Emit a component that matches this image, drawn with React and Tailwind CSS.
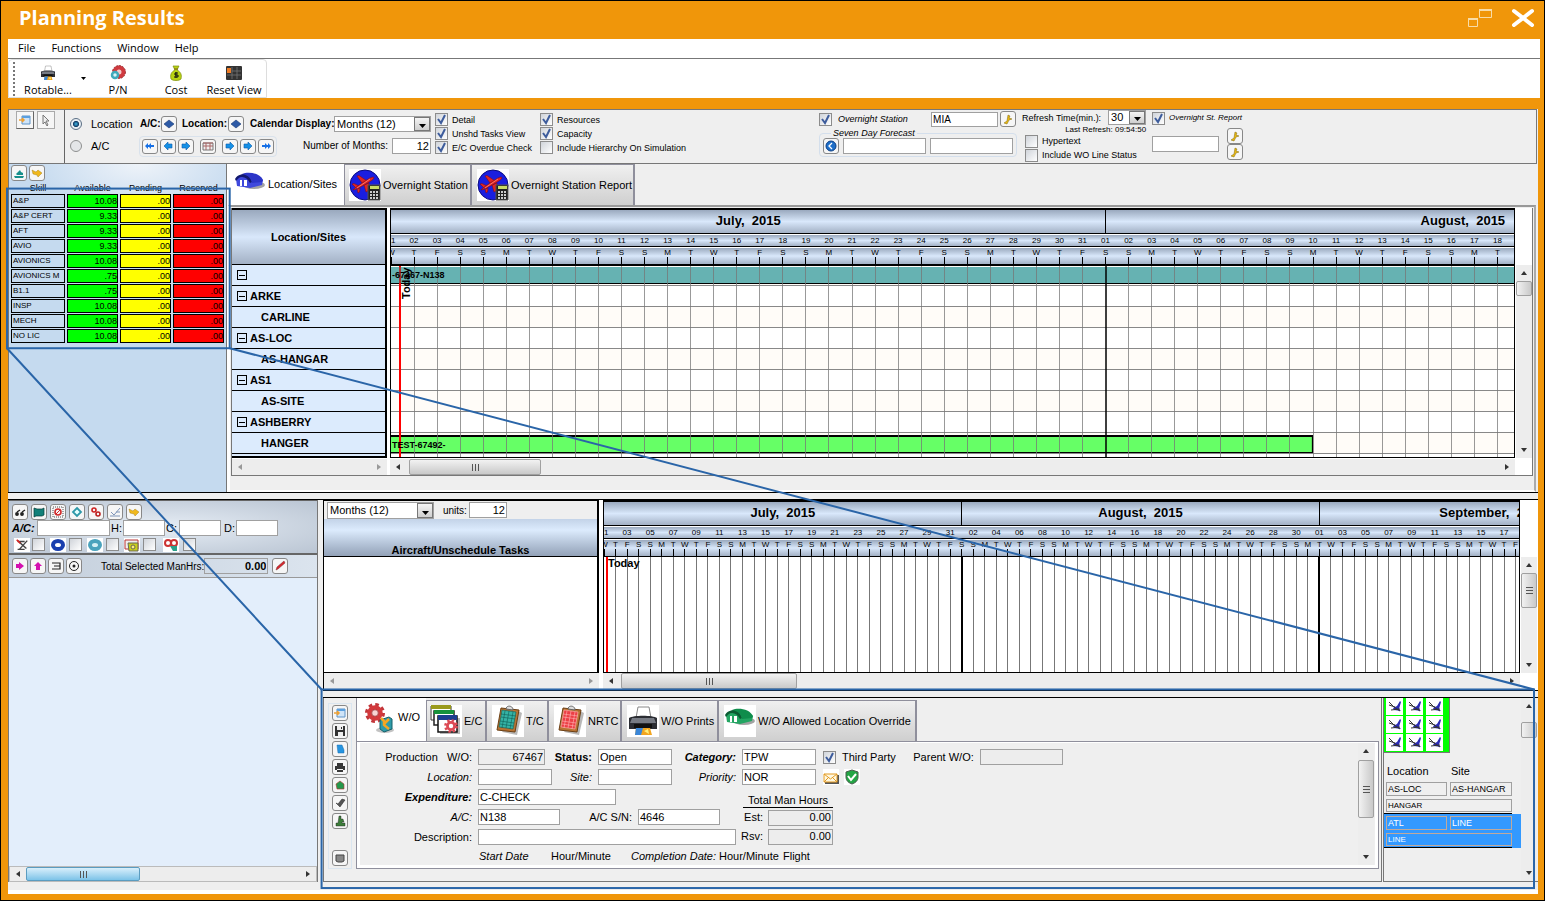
import clsx from "clsx";

const SKILLS = [
  ["A&P", "10.08"],
  ["A&P CERT", "9.33"],
  ["AFT", "9.33"],
  ["AVIO", "9.33"],
  ["AVIONICS", "10.08"],
  ["AVIONICS M", ".75"],
  ["B1.1", ".75"],
  ["INSP", "10.08"],
  ["MECH", "10.08"],
  ["NO LIC", "10.08"],
];

const LOCATIONS = [
  { name: "", parent: true },
  { name: "ARKE", parent: true },
  { name: "CARLINE" },
  { name: "AS-LOC", parent: true },
  { name: "AS-HANGAR" },
  { name: "AS1", parent: true },
  { name: "AS-SITE" },
  { name: "ASHBERRY", parent: true },
  { name: "HANGER" },
];

const MONTHS = [
  { label: "July,  2015", start: 0, days: 31 },
  { label: "August,  2015", start: 31, days: 31 },
  { label: "September,  2015", start: 62, days: 30 },
];

const WEEKDAYS = "WTFSSMT";

const STEEL = "bg-linear-to-b from-[#9aa9be] via-[#d9e8fb] to-[#a3b1c5]";

/* ---------- icons ---------- */

function Gear({ cx, cy, r, fill, hole = "#fff" }) {
  return (
    <g>
      <circle cx={cx} cy={cy} r={r} fill="none" stroke={fill} strokeWidth={r * 0.5} strokeDasharray={`${r * 0.42} ${r * 0.365}`} />
      <circle cx={cx} cy={cy} r={r * 0.9} fill={fill} />
      <circle cx={cx} cy={cy} r={r * 0.4} fill={hole} />
    </g>
  );
}

function GearsIcon({ className }) {
  return (
    <svg viewBox="0 0 32 32" className={className} aria-hidden="true">
      <ellipse cx="21" cy="28" rx="9" ry="3" fill="#999" opacity=".6" />
      <circle cx="11" cy="11" r="8.500" fill="none" stroke="#c2363a" strokeWidth="3" strokeDasharray="3.6 3.075" />
      <circle cx="11" cy="11" r="5.500" fill="none" stroke="#d3393c" strokeWidth="4.500" />
      <circle cx="11" cy="11" r="3.300" fill="#f7d4d4" stroke="#8f1f22" strokeWidth=".7" />
      <path d="M16 18l9-3 3 2v10l-8 3-4-3z" fill="#2f9ba8" stroke="#14606b" />
      <path d="M17 16l3 3 0 4 5 4M20 22l5-5" stroke="#f5a623" strokeWidth="2.5" fill="none" />
    </svg>
  );
}

function WindowsIcon({ className }) {
  return (
    <svg viewBox="0 0 32 32" className={className} aria-hidden="true">
      <path d="M10 13h20v16H10z" fill="#888" opacity=".6" />
      <path d="M1 1h20v14H1z" fill="#fff" stroke="#333" />
      <path d="M1 0h20v4H1z" fill="#9a9a1c" />
      <path d="M4 6h20v14H4z" fill="#fff" stroke="#222" strokeWidth="1.5" />
      <path d="M4 5h20v4H4z" fill="#16913c" />
      <path d="M8 11h19v16H8z" fill="#fff" stroke="#111" strokeWidth="1.5" />
      <path d="M8 10h19v5H8z" fill="#1c3d8f" />
      <Gear cx={21} cy={21} r={5.5} fill="#dc4a55" />
    </svg>
  );
}

function ClipboardIcon({ className, color, dark }) {
  return (
    <svg viewBox="0 0 32 32" className={className} aria-hidden="true">
      <path d="M10 27l15 3 5-22-4-2z" fill="#888" opacity=".6" />
      <path d="M9 3l18 2-4 22-18-2z" fill="#b87333" stroke="#6b3f14" />
      <path d="M10 5l14 2-3 17-14-2z" fill={color} stroke={dark} strokeWidth=".6" />
      <path d="M9 9l15 2M9 12l14 2M8 16l14 2M8 19l13 2M13 6l-3 17M17 6l-3 17M21 7l-3 17" stroke={dark} strokeWidth=".6" />
      <path d="M14 4c0-4 7-4 7 1z" fill="#ddd" stroke="#666" />
    </svg>
  );
}

function PrinterIcon({ className }) {
  return (
    <svg viewBox="0 0 32 32" className={className} aria-hidden="true">
      <path d="M9 13l2-11h11l2 11z" fill="#fff" stroke="#888" />
      <path d="M2 13c4-3 24-3 28 0v11H2z" fill="#2b2d33" />
      <path d="M5 13h22l2 5H3z" fill="#777b84" />
      <path d="M7 19h18v4H7z" fill="#111" />
      <path d="M9 23h14l2 7H8z" fill="#f2a51f" />
      <path d="M9 23h7l-2 7H8z" fill="#3a86d8" />
      <path d="M17 26l4-2 1 5z" fill="#fff07a" />
    </svg>
  );
}

function HouseIcon({ className, roof, dark, wall }) {
  return (
    <svg viewBox="0 0 32 20" className={className} aria-hidden="true">
      <ellipse cx="20" cy="14" rx="11" ry="4" fill="#666" opacity=".6" />
      <path d="M2 8l6-4 12-1 9 6-1 5-12 3-13-2z" fill={wall} />
      <path d="M1 8c3-5 8-5 10-5 5 1 6 5 7 8l-2 1c-2-4-5-6-8-6-3 0-4 2-6 4z" fill={dark} />
      <path d="M8 3c6-3 18-1 21 6l-1 2-10 1c-1-5-4-8-10-9z" fill={roof} />
      <path d="M6 9h2v6H6zM10 9h3v6h-3z" fill="#fff" />
    </svg>
  );
}

function StationIcon() {
  return (
    <span className="flex size-8 shrink-0 bg-white">
      <svg viewBox="0 0 32 32" className="size-8" aria-hidden="true">
        <circle cx="16" cy="16" r="15" fill="#1a1ee0" stroke="#0c0c80" />
        <g fill="#e02424" stroke="#7c0d0d" strokeWidth=".5">
          <path d="M13 14L8 7l2-.5 8 5.500z" />
          <path d="M15 16l2 7 2-1 1-8z" />
          <path d="M7 19l-4-4 2-.5 5 2.500z" />
          <path d="M8 20l1 4 1.500-1 .5-4z" />
          <path d="M4 21c1-2 12-9 17-12 2-1 3-1 4-.5 0 1-1 2-2.500 3C18 14.500 9 20 4 21z" />
        </g>
        <path d="M8 19l13-9" stroke="#ff8b7b" strokeWidth=".8" />
        <path d="M19 16h12v15H19z" fill="#222" stroke="#555" />
        <path d="M21 17h9v3h-9z" fill="#c9dc66" />
        <path d="M21 22h2v2h-2zM24 22h2v2h-2zM27 22h2v2h-2zM21 25h2v2h-2zM24 25h2v2h-2zM27 25h2v2h-2zM21 28h2v2h-2zM24 28h2v2h-2zM27 28h2v2h-2z" fill="#ccc" />
      </svg>
    </span>
  );
}

function PlaneIcon() {
  return (
    <svg viewBox="0 0 17 17" className="h-[17px] w-[17px] bg-white" aria-hidden="true">
      <path d="M7 10l4-2 3-5 1 1-2 7 2 2-7-1z" fill="#2b2bb4" />
      <path d="M3 4l5 5 6 4M3 7l6 2M5 12l9-1" stroke="#333" strokeWidth="1" fill="none" />
    </svg>
  );
}

function MoneyBag() {
  return (
    <svg viewBox="0 0 16 16" className="size-4" aria-hidden="true">
      <path d="M5 1h6L9 5c4 2 5 5 4 9-2 2-8 2-10 0-1-4 0-7 4-9z" fill="#b9d313" stroke="#7b8d0c" strokeWidth=".7" />
      <path d="M6 4h4" stroke="#7a5a12" />
      <path d="M10 8H7v2h3v2H6M8 7v6" stroke="#111" fill="none" />
    </svg>
  );
}

function RotorIcon() {
  return (
    <svg viewBox="0 0 16 16" className="size-4" aria-hidden="true">
      <circle cx="9" cy="7" r="4.500" fill="#f4c9c9" stroke="#cf3a3f" strokeWidth="4" />
      <circle cx="9" cy="7" r="6.500" fill="none" stroke="#8f1f22" strokeWidth=".8" strokeDasharray="2 1" />
      <circle cx="5" cy="10" r="3" fill="#d9f3f7" stroke="#3fa9bb" strokeWidth="2.500" />
    </svg>
  );
}

function ResetIcon() {
  return (
    <svg viewBox="0 0 16 16" className="size-4" aria-hidden="true">
      <rect y="1" width="16" height="14" rx="1" fill="#333" />
      <path d="M1 3h4v5H1z" fill="#ee7b24" />
      <path d="M6 2v12M11 2v12M6 6h9M1 10h14" stroke="#777" strokeWidth=".8" />
    </svg>
  );
}

// small glyphs used on the square tool buttons
const GLYPHS = {
  sheet: (
    <g>
      <path d="M3 2h8v8H3z" fill="#cfe4f8" stroke="#5e94c8" />
      <path d="M3 2h8v2H3z" fill="#5aa0e0" />
      <path d="M0 6h5M3 4l2 2-2 2" stroke="#f0a030" strokeWidth="1.5" fill="none" />
    </g>
  ),
  diamond: <path d="M6 2l5 4-5 4-5-4z" fill="#2d5aa6" stroke="#1a3a75" strokeWidth=".6" />,
  tealboat: <path d="M1 9h10l-1 2H2zM3 7l4-4 1 2 2 1v2H4z" fill="#178f8b" />,
  pointer: <path d="M1 3l4 2 2-2 4 3-4 4-1-2-4-1z" fill="#f0b81c" stroke="#9a7208" strokeWidth=".4" />,
  key: <path d="M6 2l2 1-1 2 3 1-3 1-2 4-3-1 3-2z" fill="#e8b90e" stroke="#80650a" strokeWidth=".5" />,
  glasses: (
    <g fill="#222" stroke="#222" strokeWidth="1.4">
      <circle cx="3" cy="8" r="1.2" />
      <circle cx="8" cy="8" r="1.2" />
      <path d="M3 6l3-2M8 6l3-2" />
    </g>
  ),
  screen: <path d="M1 2l3 1h5l2-1v7l-2 1H3l-2 1z" fill="#128079" stroke="#053c39" strokeWidth=".7" />,
  redbox: (
    <g fill="none">
      <path d="M1 1h10v10H1z" stroke="#555" strokeDasharray="1 1" />
      <circle cx="6" cy="6" r="3" stroke="#d22a2a" strokeWidth="1.6" />
      <path d="M4 8l4-4" stroke="#d22a2a" />
    </g>
  ),
  diamondring: <path d="M6 2l4 4-4 4-4-4z" fill="#e6ffff" stroke="#2d98a8" strokeWidth="1.8" />,
  gears: (
    <g>
      <circle cx="4" cy="4" r="2" stroke="#c22" strokeWidth="1.6" fill="none" />
      <circle cx="8" cy="8" r="2" stroke="#b22" strokeWidth="1.6" fill="none" />
    </g>
  ),
  check: <path d="M1 10h10M2 6l3 3 6-7M7 6h4" stroke="#7d94b8" fill="none" />,
  magentaRight: <path d="M5 2l5 4-5 4V8H2V4h3z" fill="#d411b0" />,
  magentaUp: <path d="M6 2l4 4H8v4H4V6H2z" fill="#d411b0" />,
  list: <path d="M2 3h8v6H2M4 6h6" stroke="#222" fill="none" strokeWidth="1.2" />,
  target: (
    <g>
      <circle cx="6" cy="6" r="4.5" stroke="#222" fill="none" />
      <circle cx="6" cy="6" r="1.5" fill="#222" />
    </g>
  ),
  pencil: <path d="M2 10l1-3 7-6 1 2-7 6z" fill="#d8262c" stroke="#733" strokeWidth=".5" />,
  globe: (
    <g>
      <circle cx="6" cy="6" r="5" fill="#1f6fc9" stroke="#0c3f86" />
      <path d="M7 3L4 6l3 3" stroke="#fff" fill="none" strokeWidth="1.3" />
    </g>
  ),
  save: (
    <g>
      <path d="M1 1h10v10H1z" fill="#333" />
      <path d="M3 1h6v4H3zM4 7h5v4H4z" fill="#eee" />
      <path d="M7 2h1v2H7z" fill="#333" />
    </g>
  ),
  page: <path d="M3 2h5l2 5v3H4z" fill="#2795e0" stroke="#1c6fb0" strokeWidth=".5" />,
  print: <path d="M3 2h6v3h2v4H9V8H3v1H1V5h2zM3 9h6v2H3z" fill="#383838" />,
  greenbox: <path d="M2 5l4-3 4 3v5H3z" fill="#25984c" stroke="#b33" strokeWidth=".6" />,
  pen: <path d="M2 6l4 4 5-7-3-1-4 5z" fill="#555" stroke="#222" strokeWidth=".5" />,
  person: <path d="M5 1h2v3h2l1 3-2 0v1h3v3H2V8h2z" fill="#3c7d3a" stroke="#222" strokeWidth=".4" />,
  gray: <path d="M2 3h8v6l-2 1H4L2 9z" fill="#888" stroke="#444" />,
  calendar: (
    <g>
      <path d="M1 3h10v7H1z" fill="#eee" stroke="#777" />
      <path d="M1 3h10M4 3v7M8 3v7M1 6h10" stroke="#a66" />
    </g>
  ),
  cursor: <path d="M3 1l6 6H6l2 4-1 1-2-4-2 2z" fill="#eee" stroke="#777" />,
  left: <path d="M2 6l4-4v2h4v4H6v2z" fill="#1590e6" stroke="#0d5cab" strokeWidth=".6" />,
  right: <path d="M10 6L6 2v2H2v4h4v2z" fill="#1590e6" stroke="#0d5cab" strokeWidth=".6" />,
  first: <path d="M1 6l3-3v2h1l2-2v2h3v2H7v2L5 7H4v2z" fill="#1670e6" />,
  last: <path d="M11 6L8 3v2H7L5 3v2H2v2h3v2l2-2h1v2z" fill="#1670e6" />,
};

/* ---------- form bits ---------- */

function ToolButton({ glyph, label, className = "size-4" }) {
  return (
    <button
      type="button"
      aria-label={label}
      className={clsx("flex shrink-0 items-center justify-center rounded-[3px] border border-[#888] bg-[#f6f6f6] p-px", className)}
    >
      <svg viewBox="0 0 12 12" className="size-3">
        {GLYPHS[glyph]}
      </svg>
    </button>
  );
}

function Field({ label, value = "", className, readOnly }) {
  return (
    <input
      type="text"
      aria-label={label}
      defaultValue={value}
      readOnly={readOnly}
      className={clsx("min-w-0 shrink-0 rounded-none border border-[#a0a0a0] px-px outline-none", readOnly ? "bg-[#ededed]" : "bg-white", className)}
    />
  );
}

function CheckBox({ label, hideLabel, checked, className, gap = "gap-1" }) {
  return (
    <label className={clsx("flex items-center whitespace-nowrap", gap, className)}>
      <span className="relative flex size-[13px] shrink-0">
        <input
          type="checkbox"
          defaultChecked={checked}
          aria-label={hideLabel ? label : undefined}
          className="peer size-[13px] appearance-none border border-[#8c8c8c] bg-linear-to-br from-[#d0d4da] to-white"
        />
        <svg viewBox="0 0 13 13" className="pointer-events-none absolute inset-0 hidden peer-checked:block">
          <path d="M3 6l3 4 4-8" fill="none" stroke="#3d5c9c" strokeWidth="2" />
        </svg>
      </span>
      {!hideLabel && label}
    </label>
  );
}

function Radio({ label, checked }) {
  return (
    <label className="flex w-[69px] shrink-0 items-center gap-[9px] text-[11px]">
      <input
        type="radio"
        name="view-by"
        defaultChecked={checked}
        className="size-3 shrink-0 appearance-none rounded-full border border-[#8e8f8f] bg-[#e4e6e8] checked:border-[#5b6f85] checked:bg-[radial-gradient(circle,#3fb8e8_0,#123c66_38%,#e8eef4_50%)]"
      />
      {label}
    </label>
  );
}

function Select({ label, options, className, arrow = "w-4" }) {
  return (
    <span className={clsx("relative flex shrink-0", className)}>
      <select aria-label={label} className="h-full w-full appearance-none rounded-none border border-[#a0a0a0] bg-white px-0.5 text-[11px] leading-none outline-none">
        {options.map((o) => (
          <option key={o}>{o}</option>
        ))}
      </select>
      <span className={clsx("pointer-events-none absolute inset-y-px right-px flex items-end justify-center border border-[#777] bg-linear-to-b from-[#f4f4f4] to-[#cfcfcf] pb-0.5", arrow)}>
        <svg viewBox="0 0 7 4" className="h-1 w-[7px]">
          <path d="M0 0h7L3.5 4z" />
        </svg>
      </span>
    </span>
  );
}

const ARROWS = {
  up: "M4 2l3 4H1z",
  down: "M1 2h6L4 6z",
  left: "M6 1v6L2 4z",
  right: "M2 1v6l4-3z",
};

function ScrollArrow({ dir, muted }) {
  return (
    <button type="button" aria-label={`Scroll ${dir}`} className="flex size-4 shrink-0 items-center justify-center">
      <svg viewBox="0 0 8 8" className="size-2">
        <path d={ARROWS[dir]} fill={muted ? "#999" : "#333"} />
      </svg>
    </button>
  );
}

function HScroll({ thumb, offset, muted, blue, boxed, className }) {
  return (
    <div className={clsx("flex h-4 items-center bg-[#ededed]", boxed && "border border-[#bbb]", className)}>
      <ScrollArrow dir="left" muted={muted} />
      <div className="flex h-full flex-1">
        {thumb && (
          <div
            className={clsx(
              "flex h-full items-center justify-center gap-0.5 rounded-[2px] border",
              blue ? "border-[#5b9cc0] bg-linear-to-b from-[#d8effb] to-[#7cc3e8]" : "border-[#a0a0a0] bg-linear-to-b from-[#f2f2f2] to-[#c9c9c9]",
              thumb,
              offset
            )}
          >
            <i className="h-[7px] w-px bg-[#555]" />
            <i className="h-[7px] w-px bg-[#555]" />
            <i className="h-[7px] w-px bg-[#555]" />
          </div>
        )}
      </div>
      <ScrollArrow dir="right" muted={muted} />
    </div>
  );
}

function VScroll({ thumb, grip, className }) {
  return (
    <div className={clsx("flex w-4 shrink-0 flex-col items-center bg-[#ededed]", className)}>
      <ScrollArrow dir="up" />
      <div className="w-full flex-1">
        <div className={clsx("flex w-full flex-col items-center justify-center gap-0.5 rounded-[2px] border border-[#a0a0a0] bg-linear-to-r from-[#f2f2f2] to-[#c9c9c9]", thumb)}>
          {grip && (
            <>
              <i className="h-px w-[7px] bg-[#555]" />
              <i className="h-px w-[7px] bg-[#555]" />
              <i className="h-px w-[7px] bg-[#555]" />
            </>
          )}
        </div>
      </div>
      <ScrollArrow dir="down" />
    </div>
  );
}

function Tab({ active, icon, children, className }) {
  return (
    <button
      type="button"
      role="tab"
      aria-selected={!!active}
      className={clsx(
        "flex items-center gap-0.5 whitespace-nowrap text-[11px] text-black",
        active ? "bg-white" : "border-t border-r-2 border-[#8f8f9c] bg-linear-to-b from-[#f0f0f0] to-[#cfcfcf]",
        className
      )}
    >
      {icon}
      {children}
    </button>
  );
}

/* ---------- timeline ---------- */

function dayOfMonth(day) {
  const month = MONTHS.find((m) => day < m.start + m.days);
  return String(day - month.start + 1).padStart(2, "0");
}

function TimelineHeader({ span, step, className }) {
  const pos = (d) => `${(d / span) * 100}%`;
  const days = Array.from({ length: Math.ceil(span) }, (_, i) => i);
  const months = MONTHS.filter((m) => m.start < span);

  return (
    <div className={clsx("border-t-2 border-black bg-white", className)}>
      <div className={clsx("mb-px h-6 border-b border-black", STEEL)}>
        <svg className="h-full w-full overflow-hidden text-[13px] font-bold">
          {months.map((m) => (
            <g key={m.label}>
              {m.start > 0 && <line x1={pos(m.start)} x2={pos(m.start)} y1="0" y2="100%" stroke="#000" shapeRendering="crispEdges" />}
              <text x={pos(m.start + m.days / 2)} y="15" textAnchor="middle" className="whitespace-pre">
                {m.label}
              </text>
            </g>
          ))}
        </svg>
      </div>
      <div className={clsx("mb-px h-3 border-b border-black", STEEL)}>
        <svg className="h-full w-full overflow-hidden text-[8px]">
          <text x="0" y="8">1</text>
          {days.filter((d) => d > 0 && d % step === 0).map((d) => (
            <text key={d} x={pos(d)} y="8" textAnchor="middle">
              {dayOfMonth(d)}
            </text>
          ))}
        </svg>
      </div>
      <div className={clsx("h-4", STEEL)}>
        <svg className="h-full w-full overflow-hidden text-[8px]">
          {days.map((d) => (
            <g key={d}>
              <text x={pos(d)} y="7" textAnchor="middle">
                {WEEKDAYS[d % 7]}
              </text>
              <line x1={pos(d)} x2={pos(d)} y1="9" y2="16" stroke="#000" shapeRendering="crispEdges" />
            </g>
          ))}
        </svg>
      </div>
    </div>
  );
}

function DayLines({ span }) {
  const days = Array.from({ length: Math.ceil(span) }, (_, i) => i).slice(1);
  return days.map((d) => {
    const x = `${(d / span) * 100}%`;
    const monthStart = MONTHS.some((m) => m.start === d);
    return <line key={d} x1={x} x2={x} y1="0" y2="100%" stroke={monthStart ? "#000" : "#777"} strokeWidth={monthStart ? 2 : 1} shapeRendering="crispEdges" />;
  });
}

/* ---------- sections ---------- */

function TitleBar() {
  return (
    <header className="flex h-[38px] items-center justify-between pr-[9px] pl-[18px] text-white">
      <h1 className="pb-1 font-['Open_Sans','Noto_Sans',sans-serif] text-xl font-bold">Planning Results</h1>
      <div className="flex items-center gap-[19px] pb-1">
        <button type="button" aria-label="Restore">
          <svg viewBox="0 0 24 18" className="h-[18px] w-6" fill="none" stroke="#f8dca8">
            <path d="M.5 9.5h9v8h-9zM11.5.5h12v8h-12z" />
            <path d="M11 1h13M0 10h10" strokeWidth="2" />
          </svg>
        </button>
        <button type="button" aria-label="Close">
          <svg viewBox="0 0 24 20" className="h-5 w-6" stroke="#fff" strokeWidth="4" strokeLinecap="round">
            <path d="M3 3l18 14M21 3L3 17" />
          </svg>
        </button>
      </div>
    </header>
  );
}

function MenuAndToolbar() {
  const tools = [
    { label: "P/N", icon: <RotorIcon /> },
    { label: "Cost", icon: <MoneyBag /> },
    { label: "Reset View", icon: <ResetIcon /> },
  ];
  return (
    <div className="mr-1 ml-[7px] bg-white font-['Open_Sans','Noto_Sans',sans-serif] text-[11px]">
      <nav className="flex h-5 items-center gap-4 border-b border-[#777] pl-[10px]">
        {["File", "Functions", "Window", "Help"].map((item) => (
          <button key={item} type="button">
            {item}
          </button>
        ))}
      </nav>
      <div className="flex h-[39px] w-[259px] items-center rounded-t-sm border border-[#ddd] pl-1 leading-[14px]">
        <span className="h-[34px] border-l-2 border-dotted border-[#777]" />
        <button type="button" className="flex w-[66px] flex-col items-center gap-0.5 pt-1">
          <PrinterIcon className="size-4" />
          Rotable...
        </button>
        <svg viewBox="0 0 5 3" className="h-[3px] w-[5px]">
          <path d="M0 0h5L2.5 3z" />
        </svg>
        <div className="flex pl-[3px]">
          {tools.map((t) => (
            <button key={t.label} type="button" className="flex w-[58px] flex-col items-center gap-0.5 pt-1 whitespace-nowrap">
              {t.icon}
              {t.label}
            </button>
          ))}
        </div>
      </div>
    </div>
  );
}

function ControlPanel() {
  return (
    <section className="mr-px flex h-[55px] border border-[#777] text-[9px] leading-[10px]">
      <div className="flex w-14 shrink-0 items-start gap-[3px] border-r border-[#666] pt-px pl-[7px]">
        <ToolButton glyph="sheet" label="Open view" className="size-[18px] rounded-none border-[#aaa] border-r-[#666] border-b-[#666] bg-[#ddd]" />
        <ToolButton glyph="cursor" label="Select" className="size-[18px] rounded-none border-[#aaa]" />
      </div>

      <div className="flex shrink-0 flex-col pt-[3px] pl-[5px]">
        <div className="flex h-[22px] items-center text-[10px] font-bold whitespace-nowrap">
          <span className="pr-px font-normal">
            <Radio label="Location" checked />
          </span>
          <span className="w-[21px]">A/C:</span>
          <ToolButton glyph="diamond" label="Pick aircraft" />
          <span className="ml-[5px] w-[46px]">Location:</span>
          <ToolButton glyph="diamond" label="Pick location" />
          <span className="ml-[6px] w-[84px]">Calendar Display:</span>
          <Select label="Calendar Display" options={["Months (12)"]} className="h-4 w-[97px] font-normal" />
        </div>
        <div className="flex h-[22px] items-center">
          <Radio label="A/C" />
          <div className="flex h-[21px] items-center gap-[2px] rounded-sm border border-[#d9e2ec] px-[2px]">
            <ToolButton glyph="first" label="First" className="h-[15px] w-4" />
            <ToolButton glyph="left" label="Previous month" className="h-[15px] w-4" />
            <ToolButton glyph="right" label="Previous day" className="h-[15px] w-4" />
            <span className="mx-1 flex">
              <ToolButton glyph="calendar" label="Pick date" className="h-[15px] w-4" />
            </span>
            <ToolButton glyph="right" label="Next day" className="h-[15px] w-4" />
            <ToolButton glyph="right" label="Next month" className="h-[15px] w-4" />
            <ToolButton glyph="last" label="Last" className="h-[15px] w-4" />
          </div>
          <label className="ml-auto flex items-center gap-1 text-[10px]">
            Number of Months:
            <Field value="12" label="Number of Months" className="h-4 w-[39px] text-right text-[11px]" />
          </label>
        </div>
      </div>

      <div className="ml-[4px] flex shrink-0 flex-col gap-px pt-[3px]">
        <CheckBox label="Detail" checked />
        <CheckBox label="Unshd Tasks View" checked />
        <CheckBox label="E/C Overdue Check" checked />
      </div>
      <div className="ml-2 flex shrink-0 flex-col gap-px pt-[3px]">
        <CheckBox label="Resources" checked />
        <CheckBox label="Capacity" checked />
        <CheckBox label="Include Hierarchy On Simulation" />
      </div>

      <div className="ml-[133px] flex w-[197px] shrink-0 flex-col">
        <div className="flex h-[18px] items-center">
          <CheckBox label="Overnight Station" checked className="w-[112px] italic" gap="gap-[6px]" />
          <Field label="Station" value="MIA" className="h-[15px] w-[67px] text-[10px]" />
          <span className="ml-[2px]">
            <ToolButton glyph="key" label="Pick station" />
          </span>
        </div>
        <fieldset className="rounded-sm border border-[#d4dfec] px-[3px] pb-[2px]">
          <legend className="ml-2 px-0.5 text-[9px] leading-[10px] italic">Seven Day Forecast</legend>
          <div className="flex items-center gap-1">
            <ToolButton glyph="globe" label="Forecast" />
            <Field label="Forecast from" className="h-4 w-[83px]" />
            <Field label="Forecast to" className="h-4 w-[83px]" />
          </div>
        </fieldset>
      </div>

      <div className="ml-[6px] flex w-[124px] shrink-0 flex-col">
        <div className="flex h-[15px] items-center justify-between whitespace-nowrap">
          Refresh Time(min.):
          <Select label="Refresh time" options={["30"]} className="h-[15px] w-[38px]" />
        </div>
        <span className="text-right text-[8px] leading-[9px]">Last Refresh: 09:54:50</span>
        <CheckBox label="Hypertext" className="ml-[3px] h-[14px]" />
        <CheckBox label="Include WO Line Status" className="ml-[3px] h-[14px]" />
      </div>
      <div className="ml-[6px] flex shrink-0 flex-col">
        <CheckBox label="Overnight St. Report" checked className="h-4 text-[8px] italic" />
        <div className="flex items-center gap-2 pt-0.5">
          <Field label="Report station" className="h-4 w-[67px]" />
          <div className="flex flex-col">
            <ToolButton glyph="key" label="Pick report station" />
            <ToolButton glyph="key" label="Run report" />
          </div>
        </div>
      </div>
    </section>
  );
}

function SkillPanel() {
  return (
    <aside className="w-[219px] shrink-0 border-r border-l border-[#777] bg-[#c5daef] bg-[radial-gradient(ellipse_at_60%_0,#eef3f9,#c5daef_60%)] bg-size-[100%_60px] bg-no-repeat">
      <div className="flex h-[17px] items-center gap-[2px] pl-[2px]">
        <ToolButton glyph="tealboat" label="Refresh skills" />
        <ToolButton glyph="pointer" label="Select skill" />
      </div>
      <table className="w-full table-fixed border-separate border-spacing-x-[2px] border-spacing-y-px text-[9px] leading-[10px]">
        <thead>
          <tr className="h-[11px]">
            <th className="w-[54px] p-0 font-normal">Skill</th>
            <th className="p-0 font-normal">Available</th>
            <th className="p-0 font-normal">Pending</th>
            <th className="p-0 font-normal">Reserved</th>
          </tr>
        </thead>
        <tbody>
          {SKILLS.map(([name, hours]) => (
            <tr key={name} className="h-[14px]">
              <td className="border border-black p-0 pl-px text-[8px] whitespace-nowrap">{name}</td>
              <td className="border border-black bg-[#00ff00] p-0 text-right">{hours}</td>
              <td className="border border-black bg-[#ffff00] p-0 text-right">.00</td>
              <td className="border border-black bg-[#ff0000] p-0 text-right">.00</td>
            </tr>
          ))}
        </tbody>
      </table>
    </aside>
  );
}

function LocationGantt() {
  const span = 48.72;
  return (
    <section className="flex min-w-0 flex-1 flex-col border-l border-white bg-[#efefef]">
      <div role="tablist" className="flex h-[41px]">
        <Tab active icon={<HouseIcon className="-mt-2 h-5 w-8" roof="#2c35c8" dark="#12186e" wall="#3f49dd" />} className="w-[116px] pl-[6px]">
          Location/Sites
        </Tab>
        <Tab icon={<StationIcon />} className="w-[128px] border-l pl-1">
          Overnight Station
        </Tab>
        <Tab icon={<StationIcon />} className="w-[163px] pl-[5px]">
          Overnight Station Report
        </Tab>
      </div>
      <div className="mr-0.5 flex flex-1 flex-col border-2 border-t-[#999] border-r-[#aaa] border-b-white border-l-white pt-px pl-px">
        <div className="mr-px flex border-x border-b border-[#777] bg-white">
          <div className="w-[155px] shrink-0">
            <div className="border-t-2 border-r-2 border-b-2 border-black">
              <div className={clsx("flex h-[54px] items-center justify-center text-[11px] font-bold", STEEL)}>Location/Sites</div>
              <ul className="h-[192px] overflow-hidden bg-[#dcebfd] text-[11px] font-bold">
                {LOCATIONS.map((row, i) => (
                  <li key={i} className={clsx("flex h-[21px] items-center border-t border-black", row.parent ? "gap-[3px] pl-[5px]" : "pl-[29px]")}>
                    {row.parent && (
                      <button type="button" aria-label={`Collapse ${row.name}`} className="flex size-[10px] items-center justify-center border border-black">
                        <i className="h-px w-[6px] bg-black" />
                      </button>
                    )}
                    {row.name}
                  </li>
                ))}
                <li className="border-t border-black" />
              </ul>
            </div>
            <HScroll muted className="mt-px" />
          </div>

          <div className="ml-[3px] min-w-0 flex-1">
            <div className="border-x border-black">
              <TimelineHeader span={span} step={1} className="border-b-2" />
              <svg className="h-[192px] w-full overflow-hidden border-b border-black bg-white">
                {LOCATIONS.map((row, i) => i % 2 === 0 && <rect key={i} y={i * 21 - 1} width="100%" height="21" fill="#fffcf8" />)}
                {LOCATIONS.map((row, i) => (
                  <line key={i} x1="0" x2="100%" y1={i * 21 + 19} y2={i * 21 + 19} stroke="#888" shapeRendering="crispEdges" />
                ))}
                <rect y="1" width="100%" height="16" fill="#66b2b2" />
                <rect y="17" width="100%" height="1" />
                <rect x="-1" y="169" width="82.2%" height="18" />
                <rect y="171" width="82%" height="15" fill="#66ff66" />
                <g opacity=".75">
                  <DayLines span={span} />
                </g>
                <rect x="8" width="2" height="191" fill="#f00" />
                <rect x="8" y="1" width="2" height="16" fill="#a33" />
                <text x="1" y="12" className="text-[9px] font-bold">
                  -67467-N138
                </text>
                <text x="1" y="182" className="text-[9px] font-bold">
                  TEST-67492-
                </text>
                <text transform="translate(19 33) rotate(-90)" className="text-[11px] font-bold">
                  Today
                </text>
              </svg>
            </div>
            <HScroll thumb="w-[132px]" offset="ml-[3px]" className="mt-px" />
          </div>
          <VScroll thumb="h-[15px]" className="mt-[57px] mb-[17px] ml-px" />
        </div>
      </div>
    </section>
  );
}

function Splitter() {
  return <div className="h-2 border-y border-black bg-[#efefef]" />;
}

function TaskPanel() {
  const filters = ["glasses", "screen", "redbox", "diamondring", "gears", "check", "pointer"];
  return (
    <aside className="flex w-[310px] shrink-0 flex-col border-x border-[#777] bg-[#e3eefb] text-[11px]">
      <div className="flex h-[55px] flex-col border-t border-b-2 border-[#666] bg-[radial-gradient(ellipse_at_center,#e6edf5,#bac5d3)] pt-[2px] pl-[3px]">
        <div className="flex h-[17px] items-center gap-[3px]">
          {filters.map((f) => (
            <ToolButton key={f} glyph={f} label={f} />
          ))}
        </div>
        <div className="flex h-4 items-center">
          <b className="w-[25px] italic">A/C:</b>
          <Field label="A/C" className="h-4 w-[73px]" />
          <span className="w-[13px] pl-px">H:</span>
          <Field label="H" className="h-4 w-[42px]" />
          <span className="w-[14px] pl-px">C:</span>
          <Field label="C" className="h-4 w-[42px]" />
          <span className="w-[15px] pl-[3px]">D:</span>
          <Field label="D" className="h-4 w-[42px]" />
        </div>
        <div className="flex h-[17px] items-center">
          <svg viewBox="0 0 16 16" className="mr-0.5 ml-0.5 h-[14px] w-4 bg-white">
            <path d="M3 3l10 9M14 3L5 13M3 13h8M3 4h8" stroke="#444" strokeWidth="1.6" />
            <path d="M2 2l4 4" stroke="#d22" strokeWidth="2" />
          </svg>
          <CheckBox hideLabel label="Tasks" />
          <svg viewBox="0 0 16 14" className="mr-[3px] ml-[5px] h-[14px] w-4 bg-white">
            <ellipse cx="8" cy="7" rx="5" ry="4" fill="#fff" stroke="#1a3fae" strokeWidth="4" />
          </svg>
          <CheckBox hideLabel label="Engines" />
          <svg viewBox="0 0 16 14" className="mr-[3px] ml-[5px] h-[14px] w-4 bg-white">
            <ellipse cx="8" cy="7" rx="5" ry="4" fill="#d5f0f5" stroke="#4aa3bd" strokeWidth="4" />
          </svg>
          <CheckBox hideLabel label="Components" />
          <svg viewBox="0 0 16 14" className="mr-[3px] ml-[5px] h-[14px] w-4 bg-white">
            <path d="M1 2h13v9H1z" fill="#eee" stroke="#b33" />
            <path d="M4 5h10v8H5z" fill="#c9cc1c" stroke="#665" />
            <circle cx="9" cy="9" r="2" fill="#fff07a" stroke="#665" />
          </svg>
          <CheckBox hideLabel label="Deferred" />
          <svg viewBox="0 0 16 14" className="mr-1 ml-[7px] h-[14px] w-4 bg-white">
            <circle cx="5" cy="5" r="3" fill="none" stroke="#c33" strokeWidth="2" />
            <circle cx="11" cy="5" r="3" fill="none" stroke="#c33" strokeWidth="2" />
            <path d="M7 8h7v5h-4z" fill="#2aa08a" />
          </svg>
          <CheckBox hideLabel label="Rotables" />
        </div>
      </div>
      <div className="flex h-[23px] items-center gap-[2px] border-b border-[#999] bg-linear-to-r from-[#c3cedb] to-[#dbe4ee] pl-[3px]">
        <ToolButton glyph="magentaRight" label="Move right" />
        <ToolButton glyph="magentaUp" label="Move up" />
        <ToolButton glyph="list" label="List" />
        <ToolButton glyph="target" label="Target" />
        <label className="ml-[17px] flex items-center text-[10px] whitespace-nowrap">
          Total Selected ManHrs:
          <Field readOnly label="Total Selected ManHrs" value="0.00" className="h-4 w-[64px] bg-transparent text-right text-[11px] font-bold" />
        </label>
        <span className="ml-0.5">
          <ToolButton glyph="pencil" label="Edit" />
        </span>
      </div>
      <div className="flex-1" />
      <HScroll boxed blue thumb="w-[114px]" />
    </aside>
  );
}

function TaskTimeline() {
  const span = 79.3;
  return (
    <div className="flex h-[190px] bg-white">
      <div className="w-[276px] shrink-0 border-t border-l border-black">
        <div className="border-r-2 border-b border-black">
          <div className="flex h-[18px] items-center bg-[#efefef] pl-[3px]">
            <Select label="Task range" options={["Months (12)"]} className="h-[17px] w-[107px]" />
            <label className="ml-[9px] flex items-center gap-0.5 text-[10px]">
              units:
              <Field label="Units" value="12" className="h-4 w-[38px] text-right text-[11px]" />
            </label>
          </div>
          <div className="flex h-[38px] items-end justify-center border-b border-black bg-linear-to-b from-[#c3d3e8] via-[#dcebfd] via-30% to-[#93a2b8] text-[11px] leading-[11px] font-bold">
            Aircraft/Unschedule Tasks
          </div>
          <div className="h-[115px]" />
        </div>
        <HScroll muted />
      </div>
      <div className="ml-1 flex min-w-0 flex-1 flex-col">
        <div className="border-x border-black">
          <TimelineHeader span={span} step={2} className="border-b" />
          <svg className="h-[116px] w-full overflow-hidden border-b border-black bg-white">
            <DayLines span={span} />
            <rect x="2" width="2" height="116" fill="#f00" />
            <text x="4" y="10" className="text-[11px] font-bold">
              Today
            </text>
          </svg>
        </div>
        <HScroll thumb="w-[176px]" offset="ml-[2px]" />
      </div>
      <VScroll thumb="h-[35px]" grip className="mt-[57px] mr-px mb-[17px] ml-px" />
    </div>
  );
}

function FormLabel({ children, className }) {
  return <span className={clsx("shrink-0 pr-[6px] text-right whitespace-pre", className)}>{children}</span>;
}

function WorkOrderForm() {
  return (
    <form className="flex-1 overflow-hidden pt-1 text-[11px]">
      <div className="flex h-5 items-center">
        <FormLabel className="w-[118px]">{"Production   W/O:"}</FormLabel>
        <Field readOnly label="Production W/O" value="67467" className="h-4 w-[67px] text-right" />
        <FormLabel className="w-[53px] font-bold">Status:</FormLabel>
        <Field label="Status" value="Open" className="h-4 w-[74px]" />
        <FormLabel className="w-[70px] font-bold italic">Category:</FormLabel>
        <Field label="Category" value="TPW" className="h-4 w-[74px]" />
        <CheckBox label="Third Party" checked className="ml-[7px]" gap="gap-[6px]" />
        <FormLabel className="w-[84px] pr-1">Parent W/O:</FormLabel>
        <Field readOnly label="Parent W/O" className="h-4 w-[83px]" />
      </div>
      <div className="flex h-5 items-center">
        <FormLabel className="w-[118px] italic">Location:</FormLabel>
        <Field label="Location" className="h-4 w-[74px]" />
        <FormLabel className="w-[46px] italic">Site:</FormLabel>
        <Field label="Site" className="h-4 w-[74px]" />
        <FormLabel className="w-[70px] italic">Priority:</FormLabel>
        <Field label="Priority" value="NOR" className="h-4 w-[74px]" />
        <button type="button" aria-label="Mail" className="ml-[7px] bg-white">
          <svg viewBox="0 0 16 16" className="size-4">
            <path d="M2 6h14v9H2z" fill="#555" />
            <path d="M1 5h13v8H1z" fill="#fff8e0" stroke="#e39a22" />
            <path d="M1 5l6.500 5L14 5M1 13l5-5M14 13L9 8" fill="none" stroke="#e39a22" />
          </svg>
        </button>
        <button type="button" aria-label="Approve" className="ml-[5px] bg-white">
          <svg viewBox="0 0 16 16" className="size-4">
            <path d="M8 1l6 2v5c0 4-3 6-6 7-3-1-6-3-6-7V3z" fill="#23a544" stroke="#4b5b4e" />
            <path d="M4 7l3 4 5-6" fill="none" stroke="#fff" strokeWidth="2" />
          </svg>
        </button>
      </div>
      <div className="flex">
        <div className="w-[376px]">
          <div className="flex h-5 items-center">
            <FormLabel className="w-[118px] font-bold italic">Expenditure:</FormLabel>
            <Field label="Expenditure" value="C-CHECK" className="h-4 w-[138px]" />
          </div>
          <div className="flex h-5 items-center">
            <FormLabel className="w-[118px] italic">A/C:</FormLabel>
            <Field label="Aircraft" value="N138" className="h-4 w-[82px]" />
            <FormLabel className="w-[78px]">A/C S/N:</FormLabel>
            <Field label="A/C S/N" value="4646" className="h-4 w-[82px]" />
          </div>
          <div className="flex h-5 items-center">
            <FormLabel className="w-[118px]">Description:</FormLabel>
            <Field label="Description" className="h-4 w-[258px]" />
          </div>
        </div>
        <div className="w-[97px] pt-[6px] pl-[7px]">
          <div className="border-b border-black text-center leading-[14px]">Total Man Hours</div>
          <div className="flex h-[19px] items-center justify-end">
            <span className="pr-[5px]">Est:</span>
            <Field readOnly label="Estimated hours" value="0.00" className="h-4 w-[65px] text-right" />
          </div>
          <div className="flex h-[19px] items-center justify-end">
            <span className="pr-[5px]">Rsv:</span>
            <Field readOnly label="Reserved hours" value="0.00" className="h-4 w-[65px] text-right" />
          </div>
        </div>
      </div>
      <div className="flex h-[18px] items-center pl-[119px]">
        <span className="w-[72px] italic">Start Date</span>
        <span className="w-[80px]">Hour/Minute</span>
        <span className="w-[88px] italic">Completion Date:</span>
        <span className="w-16">Hour/Minute</span>
        <span>Flight</span>
      </div>
      <div className="flex pl-[118px]">
        <Field label="Start Date" className="h-4 w-[67px]" />
        <Field label="Start hour" className="ml-[5px] h-4 w-[19px]" />
        <Field label="Start minute" className="ml-[13px] h-4 w-[19px]" />
        <Field label="Completion Date" className="ml-[29px] h-4 w-[67px]" />
        <Field label="Completion hour" className="ml-[21px] h-4 w-[19px]" />
        <Field label="Completion minute" className="ml-[13px] h-4 w-[19px]" />
        <Field label="Flight" className="ml-[13px] h-4 w-[75px]" />
      </div>
    </form>
  );
}

function WorkOrderPanel() {
  return (
    <div className="flex min-w-0 flex-1 border-r border-b border-[#777] pl-1">
      <div className="mt-[5px] flex h-[166px] w-6 shrink-0 flex-col items-center gap-[2px] border border-[#dbe6f0] pt-px">
        {["sheet", "save", "page", "print", "greenbox", "pen", "person"].map((g) => (
          <ToolButton key={g} glyph={g} label={g} />
        ))}
        <span className="mt-auto mb-0.5">
          <ToolButton glyph="gray" label="Stop" />
        </span>
      </div>
      <div className="mb-3 ml-1 flex min-w-0 flex-1 flex-col">
        <div role="tablist" className="flex h-[43px] items-stretch">
          <Tab active icon={<GearsIcon className="size-8" />} className="w-[70px] border-l border-[#8f8f9c] pb-1 pl-[7px]">
            W/O
          </Tab>
          <Tab icon={<WindowsIcon className="size-8 bg-white" />} className="mt-0.5 w-[61px] border-l pl-[3px]">
            E/C
          </Tab>
          <Tab icon={<ClipboardIcon className="size-8 bg-white" color="#35b3a5" dark="#0f5e56" />} className="mt-0.5 w-[62px] pl-[5px]">
            T/C
          </Tab>
          <Tab icon={<ClipboardIcon className="size-8 bg-white" color="#ec3f45" dark="#ffb6b6" />} className="mt-0.5 w-[73px] pl-[5px]">
            NRTC
          </Tab>
          <Tab icon={<PrinterIcon className="size-8 bg-white" />} className="mt-0.5 w-[97px] pl-[5px]">
            W/O Prints
          </Tab>
          <Tab icon={<HouseIcon className="h-8 w-8 bg-white pb-2" roof="#0f8d4c" dark="#0b5c33" wall="#23a562" />} className="mt-0.5 w-[198px] border-r pl-[5px]">
            W/O Allowed Location Override
          </Tab>
        </div>
        <div className="mr-0.5 flex min-h-0 flex-1 border border-[#8f8f9c] bg-white p-[3px] pt-px">
          <div className="flex h-[122px] flex-1 bg-[#efefef]">
            <WorkOrderForm />
            <VScroll thumb="mt-px h-[58px]" grip className="mr-px" />
          </div>
        </div>
      </div>
    </div>
  );
}

function SitePanel() {
  return (
    <div className="ml-px flex w-[155px] shrink-0 border-b border-l border-[#777] text-[10px]">
      <div className="min-w-0 flex-1">
        <div className="grid w-[66px] grid-cols-[repeat(3,17px)] gap-x-[3px] gap-y-px border-r border-b border-[#777] bg-[#00ff00] pb-px pl-[2px]">
          {Array.from({ length: 9 }, (_, i) => (
            <PlaneIcon key={i} />
          ))}
        </div>
        <div className="flex pt-3 pb-0.5 pl-[3px] text-[11px] leading-[13px]">
          <span className="w-16">Location</span>
          <span>Site</span>
        </div>
        <SiteRow location="AS-LOC" site="AS-HANGAR" name="HANGAR" />
        <SiteRow location="ATL" site="LINE" name="LINE" selected />
      </div>
      <VScroll thumb="mt-2 h-4" className="mr-px" />
    </div>
  );
}

function SiteRow({ location, site, name, selected }) {
  const field = selected ? "border-[#c0a99c] bg-transparent text-white" : "bg-transparent";
  return (
    <div className={clsx("pt-[2px]", selected && "bg-[#3399ff]")}>
      <div className="w-[128px] border-b border-black pb-px pl-[2px]">
        <div className="flex h-[14px] gap-[3px]">
          <Field readOnly label="Location" value={location} className={clsx("h-[14px] w-[61px] text-[9px]", field)} />
          <Field readOnly label="Site" value={site} className={clsx("h-[14px] w-[62px] text-[9px]", field)} />
        </div>
        <Field readOnly label="Name" value={name} className={clsx("mt-[3px] block h-[13px] w-[126px] text-[8px]", field)} />
      </div>
    </div>
  );
}

// zoom lines that tie the skill table to the work order area
function CalloutLines() {
  return (
    <svg viewBox="0 0 1545 901" preserveAspectRatio="none" className="pointer-events-none absolute inset-0 h-full w-full" fill="none" stroke="#2a65a8" strokeWidth="2" aria-hidden="true">
      <rect x="6" y="188" width="223" height="160" />
      <rect x="321" y="690" width="1214" height="199" />
      <path d="M6 348L321 690M229 348l1306 342" />
    </svg>
  );
}

export default function App() {
  return (
    <div className="relative flex min-h-screen min-w-[1400px] flex-col overflow-hidden border border-black bg-[#f0960a] pb-[6px] font-['Liberation_Sans',Arial,sans-serif] text-black">
      <TitleBar />
      <MenuAndToolbar />
      <main className="mt-[11px] mr-[6px] ml-[7px] flex flex-1 flex-col bg-[#efefef]">
        <ControlPanel />
        <div className="flex h-[328px]">
          <SkillPanel />
          <LocationGantt />
        </div>
        <Splitter />
        <div className="flex flex-1">
          <TaskPanel />
          <div className="ml-[5px] flex min-w-0 flex-1 flex-col">
            <TaskTimeline />
            <Splitter />
            <div className="flex flex-1 border-l border-[#777]">
              <WorkOrderPanel />
              <SitePanel />
            </div>
          </div>
        </div>
        <div className="h-3 border-b-4 border-white" />
      </main>
      <CalloutLines />
    </div>
  );
}
